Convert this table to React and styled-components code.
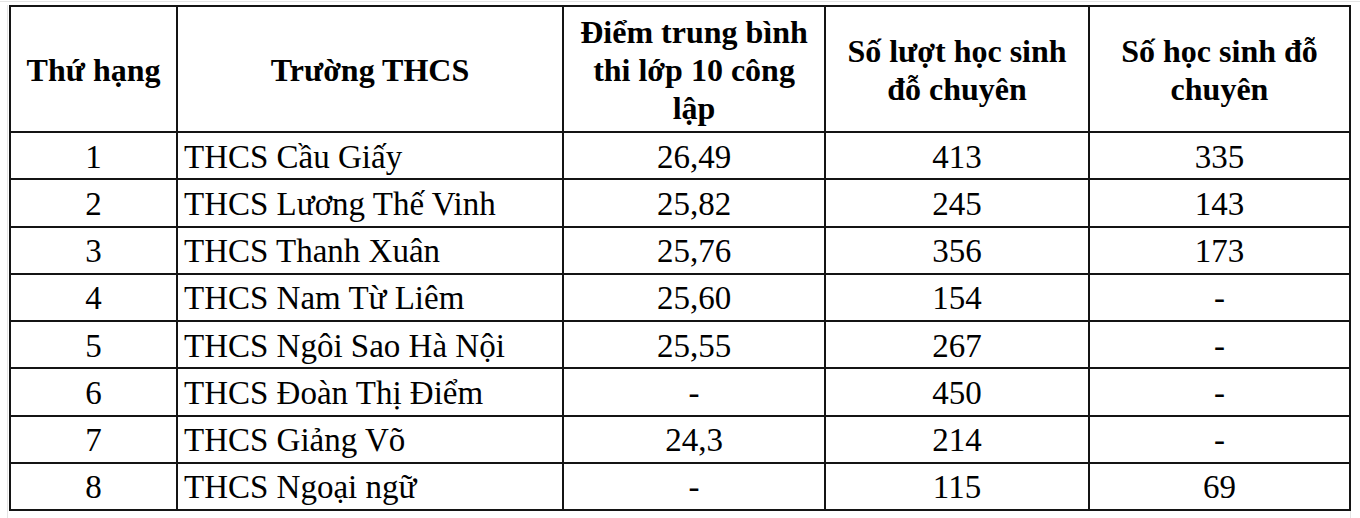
import React from 'react'
import styled, { createGlobalStyle } from 'styled-components'

const GlobalStyle = createGlobalStyle`
  html, body {
    margin: 0;
    padding: 0;
    background: #ffffff;
  }
  body {
    font-family: 'Liberation Serif', 'Times New Roman', serif;
    color: #000;
  }
`

// light spreadsheet grid seen around the table
const Sheet = styled.div`
  width: 1360px;
  height: 518px;
  box-sizing: border-box;
  margin-top: 1px;
  border-top: 1px solid #e4e4e4;
  padding: 3px 0 0 7px;
`

const SheetInner = styled.div`
  height: 100%;
  width: 1344px;
  box-sizing: border-box;
  border-left: 1px solid #e4e4e4;
  border-right: 1px solid #e4e4e4;
  padding-left: 1px;
`

const Table = styled.table`
  border-collapse: collapse;
  table-layout: fixed;
  width: 1341px;
`

const HeadCell = styled.th`
  border: 2px solid #141414;
  height: 122px;
  padding: 2px 6px 0;
  font-size: 32px;
  line-height: 38px;
  font-weight: 700;
  text-align: center;
  vertical-align: middle;
`

const Row = styled.tr`
  height: 47.25px;
`

const Cell = styled.td`
  border: 2px solid #141414;
  padding: 2px 6px 0;
  font-size: 33px;
  line-height: 38px;
  text-align: ${p => (p.$left ? 'left' : 'center')};
  vertical-align: middle;
  white-space: nowrap;
`

const rows = [
  ['1', 'THCS Cầu Giấy', '26,49', '413', '335'],
  ['2', 'THCS Lương Thế Vinh', '25,82', '245', '143'],
  ['3', 'THCS Thanh Xuân', '25,76', '356', '173'],
  ['4', 'THCS Nam Từ Liêm', '25,60', '154', '-'],
  ['5', 'THCS Ngôi Sao Hà Nội', '25,55', '267', '-'],
  ['6', 'THCS Đoàn Thị Điểm', '-', '450', '-'],
  ['7', 'THCS Giảng Võ', '24,3', '214', '-'],
  ['8', 'THCS Ngoại ngữ', '-', '115', '69'],
]

function App() {
  return (
    <>
      <GlobalStyle />
      <Sheet>
        <SheetInner>
          <Table>
            <colgroup>
              <col style={{ width: 167 }} />
              <col style={{ width: 386 }} />
              <col style={{ width: 262 }} />
              <col style={{ width: 264 }} />
              <col style={{ width: 261 }} />
            </colgroup>
            <thead>
              <tr>
                <HeadCell>Thứ hạng</HeadCell>
                <HeadCell>Trường THCS</HeadCell>
                <HeadCell>Điểm trung bình thi lớp 10 công lập</HeadCell>
                <HeadCell>Số lượt học sinh đỗ chuyên</HeadCell>
                <HeadCell>Số học sinh đỗ chuyên</HeadCell>
              </tr>
            </thead>
            <tbody>
              {rows.map(r => (
                <Row key={r[0]}>
                  <Cell>{r[0]}</Cell>
                  <Cell $left>{r[1]}</Cell>
                  <Cell>{r[2]}</Cell>
                  <Cell>{r[3]}</Cell>
                  <Cell>{r[4]}</Cell>
                </Row>
              ))}
            </tbody>
          </Table>
        </SheetInner>
      </Sheet>
    </>
  )
}

export default App
